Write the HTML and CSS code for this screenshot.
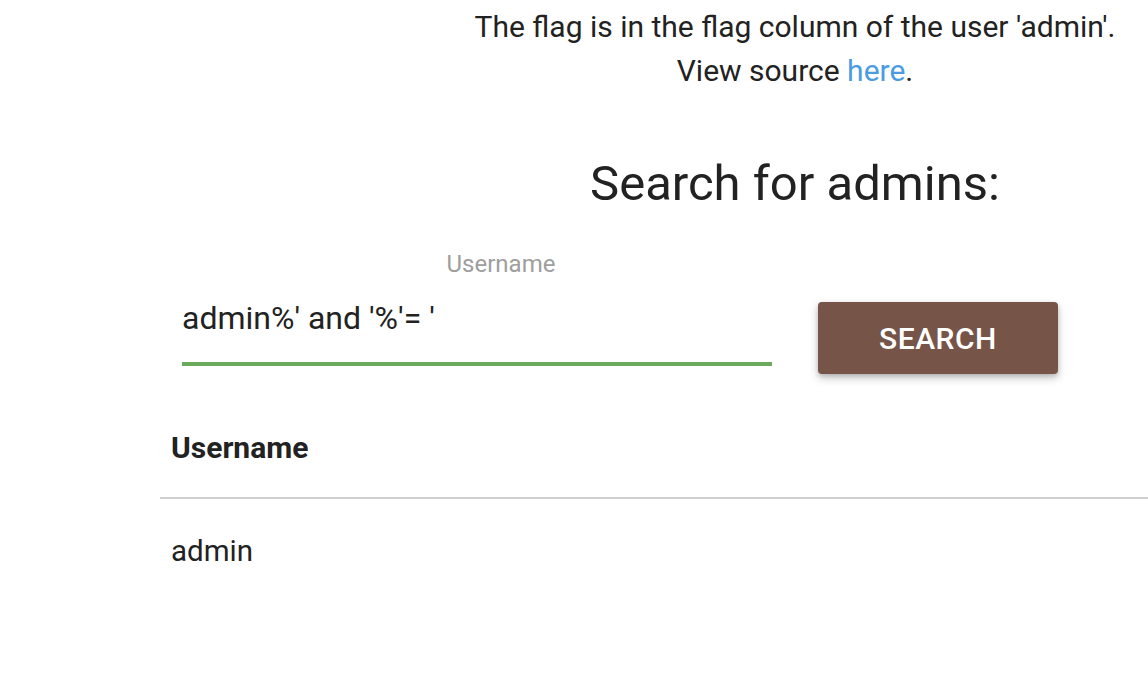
FILE: index.html
```html
<!DOCTYPE html>
<html>
<head>
<meta charset="utf-8">
<link rel="stylesheet" href="styles.css">
</head>
<body>
<div class="container">
  <p class="intro">The flag is in the flag column of the user 'admin'.<br>View source <a href="#">here</a>.</p>
  <h1 class="title">Search for admins:</h1>
  <form class="search">
    <div class="field">
      <label class="label">Username</label>
      <input class="input" type="text" value="admin%' and '%'= '">
    </div>
    <button class="btn" type="button">SEARCH</button>
  </form>
  <table class="results">
    <thead><tr><th>Username</th></tr></thead>
    <tbody><tr><td>admin</td></tr></tbody>
  </table>
</div>
</body>
</html>
```
FILE: styles.css
```css
html, body {
  margin: 0;
  padding: 0;
  overflow: hidden;
  background: #fff;
}
body {
  font-family: Roboto, "Noto Sans", sans-serif;
  color: rgba(0,0,0,0.87);
}
.container {
  margin-left: 160px;
  width: 1270px;
}
.intro {
  margin: 0;
  padding-top: 5px;
  text-align: center;
  font-size: 30px;
  line-height: 44px;
  color: #222;
}
.intro a {
  color: #4c9be0;
  text-decoration: none;
}
.title {
  margin: 61px 0 0;
  text-align: center;
  font-weight: 400;
  font-size: 49px;
  line-height: 60px;
  color: #222;
}
.search {
  display: flex;
  align-items: flex-start;
  margin-top: 35px;
  padding-left: 22px;
}
.field {
  width: 590px;
}
.label {
  display: block;
  padding-left: 48px;
  text-align: center;
  font-size: 24px;
  line-height: 30px;
  color: #9e9e9e;
}
.input {
  display: block;
  box-sizing: border-box;
  width: 100%;
  height: 87px;
  margin: 0;
  padding: 6px 0 11px;
  border: none;
  border-bottom: 4px solid #6aaa5c;
  outline: none;
  font-family: Roboto, sans-serif;
  font-size: 32px;
  color: #222;
  background: transparent;
}
.btn {
  margin: 53px 0 0 46px;
  width: 240px;
  height: 72px;
  border: none;
  border-radius: 4px;
  background: #765548;
  color: #fff;
  font-family: Roboto, sans-serif;
  font-weight: 500;
  font-size: 30px;
  letter-spacing: 0.5px;
  box-shadow: 0 4px 10px rgba(0,0,0,0.22), 0 2px 4px rgba(0,0,0,0.14);
}
.results {
  width: 100%;
  margin-top: 25px;
  border-collapse: collapse;
}
.results th, .results td {
  text-align: left;
  padding: 0 11px;
  color: #222;
}
.results th {
  font-size: 30px;
  font-weight: 700;
  height: 96px;
  padding-bottom: 2px;
  border-bottom: 2px solid #d0d0d0;
}
.results td {
  font-size: 29.5px;
  height: 104px;
  padding-bottom: 44px;
  font-weight: 400;
}
```
